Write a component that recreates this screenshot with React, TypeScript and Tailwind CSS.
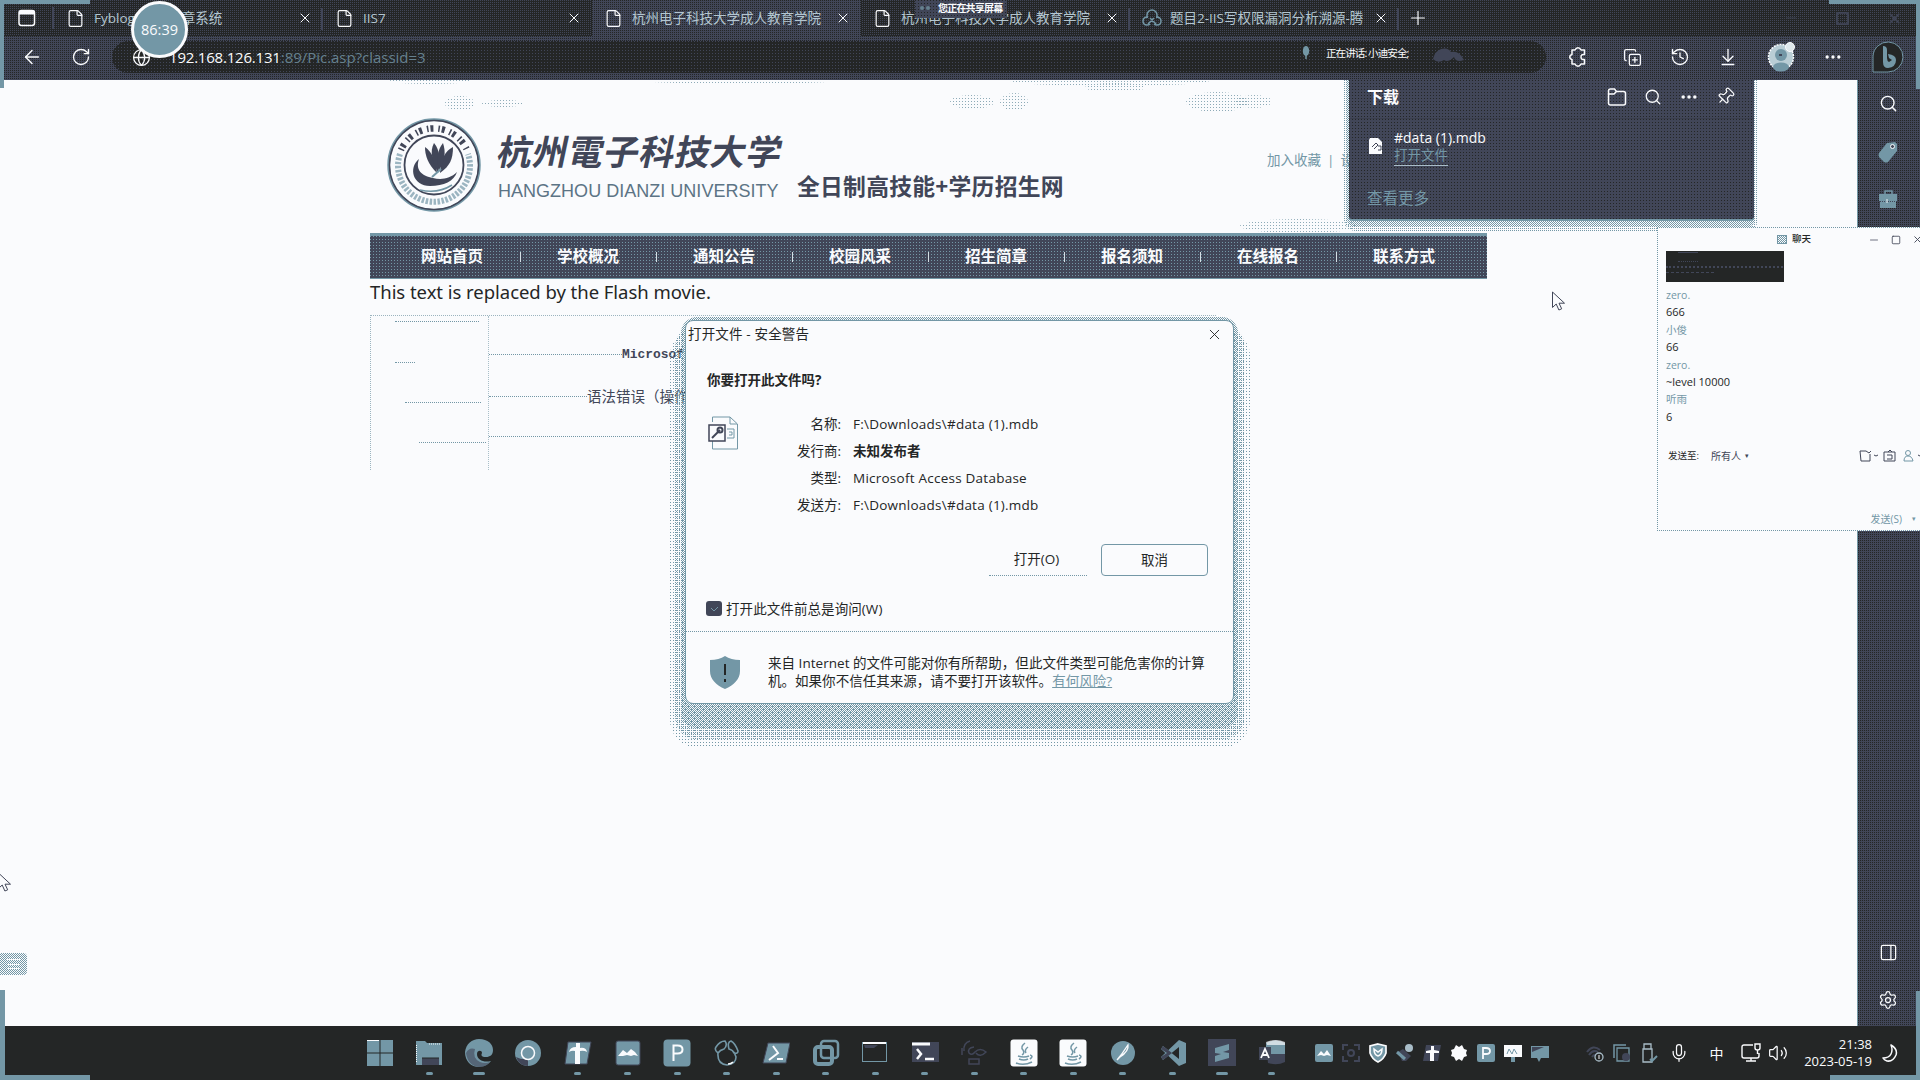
import React from "react";
import {
  ArrowLeft, RotateCw, Globe, History, ArrowDownToLine, Ellipsis, Search, Pin,
  Settings, Mic, Volume2, File, X, Plus, PanelRight,
  Minus, Square, CopyPlus,
} from "lucide-react";

const WHITE = "#fafbfd";
const TEAL = "#7397a6";
const SLATE = "#414658";
const DARK = "#242626";

const grainDark =
  "bg-[#242626] bg-[image:conic-gradient(from_270deg_at_1px_1px,#414658_90deg,transparent_0)] bg-[size:2px_2px]";
const grainSparse =
  "bg-[#242626] bg-[image:conic-gradient(from_270deg_at_1px_1px,#414658_90deg,transparent_0)] bg-[size:3px_3px]";
const grainSlate =
  "bg-[#414658] bg-[image:conic-gradient(from_270deg_at_1px_1px,#242626_90deg,transparent_0)] bg-[size:2px_2px]";
const grainPanel =
  "bg-[#414658] bg-[image:conic-gradient(from_270deg_at_1px_1px,#242626_90deg,transparent_0)] bg-[size:3px_3px]";
const grainNav =
  "bg-[#414658] bg-[image:conic-gradient(from_270deg_at_1px_1px,#7397a6_90deg,transparent_0)] bg-[size:3px_3px]";
const checker =
  "bg-[image:conic-gradient(#7397a6_25%,transparent_0_50%,#7397a6_0_75%,transparent_0)] bg-[size:2px_2px]";
const dots2 =
  "bg-[image:conic-gradient(from_270deg_at_1px_1px,#7397a6_90deg,transparent_0)] bg-[size:2px_2px]";
const dots3 =
  "bg-[image:conic-gradient(from_270deg_at_1px_1px,#7397a6_90deg,transparent_0)] bg-[size:3px_3px]";

function Tab({ label, active, icon, sep }: { label: string; active?: boolean; icon?: React.ReactNode; sep?: boolean }) {
  return (
    <div className={"relative flex h-9 w-[269px] shrink-0 items-center pl-3 pr-2.5 " + (active ? grainSlate : "")}>
      <span className="w-[19px] shrink-0">{icon ?? <File size={19} strokeWidth={1.5} color={WHITE} />}</span>
      <span className="ml-[9px] w-[196px] overflow-hidden whitespace-nowrap text-[13.5px] text-[#b4c6d0]">{label}</span>
      <X size={16} strokeWidth={1.5} color={WHITE} className="ml-auto shrink-0" />
      {sep && <span className="absolute right-0 top-2 h-[22px] w-0.5 bg-[#414658]" />}
    </div>
  );
}

function CloudLoops() {
  return (
    <svg width="20" height="18" viewBox="0 0 20 18" fill="none" stroke={TEAL} strokeWidth="1.500">
      <path d="M5 9V6a5 5 0 0 1 10 0v3M8 9l6 6M12 9l-6 6" />
      <path d="M6 8q-5 0-5 4t4 4q2 0 3-1M14 8q5 0 5 4t-4 4q-2 0-3-1" />
    </svg>
  );
}

function WindowGlyph() {
  return (
    <svg width="18" height="18" viewBox="0 0 18 18" fill="none">
      <rect x="1" y="1.500" width="15.500" height="15" rx="2.500" stroke={WHITE} strokeWidth="1.500" />
      <path d="M1 4q0-3 3-3h10q3 0 3 3v1.500H1Z" fill={WHITE} />
    </svg>
  );
}

function TabStrip() {
  return (
    <div className={"flex h-9 shrink-0 items-center " + grainDark}>
      <div className="flex w-[54px] items-center justify-between pl-[18px]">
        <WindowGlyph />
        <span className="h-[22px] w-0.5 bg-[#414658]" />
      </div>
      <Tab label="Fyblogs博客文章系统" sep />
      <Tab label="IIS7" />
      <Tab label="杭州电子科技大学成人教育学院" active />
      <Tab label="杭州电子科技大学成人教育学院" sep />
      <Tab label="题目2-IIS写权限漏洞分析溯源-腾" sep icon={<CloudLoops />} />
      <Plus size={22} strokeWidth={1.3} color={WHITE} className="ml-[8px]" />
      <div className="ml-auto mr-[17px] flex items-center gap-9">
        <Minus size={16} strokeWidth={1.2} color={SLATE} />
        <Square size={15} strokeWidth={3} color={SLATE} />
        <X size={17} strokeWidth={2.4} color={SLATE} />
      </div>
    </div>
  );
}

function Bing() {
  return (
    <svg width="34" height="34" viewBox="0 0 34 34">
      <path d="M2 32V16A15 15 0 1 1 17 32Z" fill={DARK} stroke={TEAL} strokeWidth="1" />
      <path d="M12 6q4 0 4 4v8q0 3 2 4l3-2-3-2-1-4q8 1 8 6 0 7-8 8-5 0-5-6Z" fill={TEAL} />
    </svg>
  );
}

function Avatar() {
  return (
    <svg width="28" height="30" viewBox="0 0 28 30">
      <circle cx="14" cy="15" r="12.500" fill="#b9cdd5" stroke={WHITE} strokeWidth="1.500" strokeDasharray="2 1" />
      <circle cx="23" cy="5" r="4.500" fill="#dfe8ec" stroke={WHITE} />
      <circle cx="14" cy="13" r="6" fill={TEAL} />
      <ellipse cx="14" cy="25" rx="8" ry="4.500" fill={TEAL} />
      <path d="M12 13h3" stroke={SLATE} strokeWidth="2" />
    </svg>
  );
}

function PuzzleGlyph() {
  return (
    <svg width="18" height="20" viewBox="0 0 18 20" fill="none" stroke={WHITE} strokeWidth="1.500">
      <path d="M3 3h3q1-2.200 3-2.200T12 3h3.500v4.500q-3.500-.5-3.500 2.500t3.500 2.500V17H12q-1 2.200-3 2.200T6 17H3v-4.500Q.8 12 .8 10T3 7.500Z" strokeLinejoin="round" />
    </svg>
  );
}

function Toolbar() {
  return (
    <div className={"flex h-11 shrink-0 items-center pl-[21px] pr-[15px] " + grainSlate}>
      <ArrowLeft size={22} strokeWidth={1.6} color={WHITE} className="-mt-0.5" />
      <RotateCw size={20} strokeWidth={1.6} color={WHITE} className="-mt-0.5 ml-7" />
      <div className={"-mt-0.5 ml-[21px] flex h-8 w-[1434px] items-center rounded-full " + grainSparse}>
        <Globe size={19} strokeWidth={1.6} color={WHITE} className="ml-[20px]" />
        <span className="ml-[18px] w-[1137px] whitespace-nowrap text-[15px]">
          <span className="tracking-[-0.2px] text-[#fafbfd]">192.168.126.131</span>
          <span className="tracking-[-0.030px] text-[#66818f]">:89/Pic.asp?classid=3</span>
        </span>
        <svg width="8" height="14" viewBox="0 0 8 14" className="-mt-2 -ml-[4px]"><ellipse cx="4" cy="5" rx="3.200" ry="5" fill={TEAL} /><path d="M4 9v4" stroke={TEAL} strokeWidth="1.500" /></svg>
        <span className="-mt-1.5 ml-[16px] w-[82px] whitespace-nowrap text-[10.500px] tracking-[-0.900px] text-[#fafbfd]">正在讲话: 小迪安全;</span>
        <svg width="34" height="16" className="-mt-1 ml-[24px]" viewBox="0 0 34 16">
          <path d="M1 12q2-8 8-10 7-2 10 3 8-2 13 8-8 3-10-3-6 6-10 3-6 4-11-1Z" fill={SLATE} />
        </svg>
      </div>
      <div className="-mt-0.5 ml-[23px] flex flex-1 items-center justify-between">
        <PuzzleGlyph />
        <CopyPlus size={19} strokeWidth={1.6} color={WHITE} className="ml-3" />
        <History size={20} strokeWidth={1.6} color={WHITE} className="ml-1" />
        <ArrowDownToLine size={20} strokeWidth={1.6} color={WHITE} className="ml-1" />
        <span className="ml-1"><Avatar /></span>
        <Ellipsis size={20} strokeWidth={2} color={WHITE} className="ml-1" />
        <span className="ml-1"><Bing /></span>
      </div>
    </div>
  );
}

function Seal() {
  return (
    <svg width="94" height="94" viewBox="0 0 94 94" fill="none">
      <circle cx="47" cy="47" r="45.500" stroke={TEAL} strokeWidth="2.500" />
      <circle cx="47" cy="47" r="44.500" stroke={SLATE} strokeWidth="1.500" />
      <path d="M13 36A36 36 0 1 0 81 36" stroke={TEAL} strokeWidth="6" strokeDasharray="2.500 1.500" opacity=".7" />
      <path d="M14 32A36 36 0 0 1 80 32" stroke={SLATE} strokeWidth="6.500" strokeDasharray="1.500 2 3 5" />
      <circle cx="47" cy="47" r="29.500" stroke={SLATE} strokeWidth="1.800" fill={WHITE} />
      <path d="M32 41C21 50 26 68 43 68c14 0 24-5 27-14-7 7-16 8-24 6-11-2-18-8-14-19Z" fill={SLATE} />
      <path d="M33 72q18 4 32-5" stroke={TEAL} strokeWidth="1.500" />
      <path d="M50 55C49 43 45 34 38 29c0 9 3 17 12 26Z" fill={SLATE} />
      <path d="M51 55c3-12 2-23-4-30-5 9-1 19 4 30Z" fill={SLATE} />
      <path d="M53 55c10-7 13-14 13-26-8 4-12 12-13 26Z" fill={SLATE} />
      <path d="M52 52c6-9 7-18 4-27-5 6-7 15-4 27Z" fill={SLATE} />
      <path d="M45 59l9-8" stroke={TEAL} strokeWidth="2" />
    </svg>
  );
}

const nav = ["网站首页", "学校概况", "通知公告", "校园风采", "招生简章", "报名须知", "在线报名", "联系方式"];

function Patch({ cls }: { cls: string }) {
  return <div className={"absolute rounded-[50%] opacity-80 " + dots3 + " " + cls} />;
}

function Page() {
  return (
    <main className="relative flex-1 overflow-hidden bg-[#fafbfd]">
      <Patch cls="left-[445px] top-[16px] h-[15px] w-[30px]" />
      <Patch cls="left-[482px] top-[20px] h-[7px] w-[42px]" />
      <Patch cls="left-[950px] top-[15px] h-[14px] w-[44px]" />
      <Patch cls="left-[1000px] top-[13px] h-[18px] w-[28px]" />
      <Patch cls="left-[1186px] top-[12px] h-[20px] w-[62px]" />
      <Patch cls="left-[1236px] top-[15px] h-[13px] w-[36px]" />
      <Patch cls="left-[390px] top-[-3px] h-[7px] w-[80px]" />
      <Patch cls="left-[640px] top-[-4px] h-[8px] w-[200px]" />
      <Patch cls="left-[1010px] top-[-5px] h-[11px] w-[200px]" />
      <Patch cls="left-[1085px] top-[3px] h-[9px] w-[60px]" />
      <Patch cls="left-[1240px] top-[139px] h-[14px] w-[120px]" />
      <div className="ml-[370px] w-[1117px]">
        <header className="flex h-[153px]">
          <div className="ml-[17px] mt-[38px]"><Seal /></div>
          <div className="ml-[14px] mt-[47px] w-[302px]">
            <div className="-skew-x-12 whitespace-nowrap pl-[3px] text-[35px] font-bold leading-[50px] tracking-[0.6px] text-[#414658]">杭州電子科技大学</div>
            <div className="mt-[2px] whitespace-nowrap pl-[3px] font-['Liberation_Sans'] text-[18px] leading-[24px] tracking-[0.020px] text-[#5c7485]">HANGZHOU DIANZI UNIVERSITY</div>
          </div>
          <div className="mt-[90px] whitespace-nowrap text-[22.8px] font-bold leading-[34px] tracking-[0.25px] text-[#414658]">全日制高技能+学历招生网</div>
          <div className="ml-auto mr-[133px] mt-[70px] flex whitespace-nowrap text-[13.5px] leading-5 text-[#7397a6]">
            <span>加入收藏</span><span className="mx-[6px]">|</span><span>设</span>
          </div>
        </header>
        <nav className={"flex h-[46px] border-b border-t-[3px] border-[#7397a6] px-[14px] " + grainNav}>
          {nav.map((n, i) => (
            <div key={n} className="flex w-[136px] shrink-0 items-center">
              <span className="flex-1 whitespace-nowrap text-center text-[15.500px] font-semibold text-[#fafbfd]">{n}</span>
              {i < 7 && <span className="-mr-px h-2.5 w-px bg-[#d5dfe5]" />}
            </div>
          ))}
        </nav>
        <p className="-mt-px whitespace-nowrap font-['Noto_Sans'] text-[18.5px] leading-[27px] tracking-[-0.040px] text-[#242626]">This text is replaced by the Flash movie.</p>
        <div className="mt-[10px] flex h-[155px] w-[846px] border-l border-t border-dotted border-[#7397a6]/70">
          <div className="flex w-[118px] flex-col border-r border-dotted border-[#7397a6]/60">
            <div className="ml-6 h-[6px] w-[84px] border-b border-dotted border-[#7397a6]" />
            <div className="ml-6 h-[41px] w-5 border-b border-dotted border-[#7397a6]" />
            <div className="ml-[34px] h-[40px] w-[76px] border-b border-dotted border-[#7397a6]" />
            <div className="ml-12 h-[40px] w-[67px] border-b border-dotted border-[#7397a6]" />
          </div>
          <div className="flex flex-1 flex-col text-[#414658]">
            <div className="flex h-[39px] items-end">
              <span className="w-[133px] border-b border-dotted border-[#7397a6]" />
              <span className="-mb-[9px] whitespace-nowrap font-['Liberation_Mono'] text-[12.900px] font-bold leading-[18px]">Microsoft</span>
            </div>
            <div className="flex h-[42px] items-end">
              <span className="w-[98px] border-b border-dotted border-[#7397a6]" />
              <span className="-mb-[11px] whitespace-nowrap text-[14.500px] leading-[22px]">语法错误（操作</span>
            </div>
            <div className="h-[40px] border-b border-dotted border-[#7397a6]" />
          </div>
        </div>
      </div>
      <Cursor cls="left-[1552px] top-[211px]" />
    </main>
  );
}

function Cursor({ cls }: { cls: string }) {
  return (
    <svg className={"absolute " + cls} width="14" height="21" viewBox="0 0 14 21">
      <path d="M.5 1v15.500l3.700-3.500 2.700 6 2.800-1.200L7 12.200h5.500Z" fill={WHITE} stroke={SLATE} />
    </svg>
  );
}

function Sidebar() {
  return (
    <aside className={"flex w-[63px] flex-col items-center border-l border-[#7397a6] pr-0.5 pt-[14px] " + grainSlate}>
      <Search size={19} strokeWidth={1.8} color={WHITE} />
      <svg width="20" height="22" viewBox="0 0 20 22" className="mt-7">
        <path d="M9 2l8-1 2 2v7L10 21q-2 1-4 0l-5-5q-1-2 0-4Z" fill={TEAL} />
        <circle cx="14.500" cy="5.500" r="2" fill={SLATE} stroke={WHITE} />
      </svg>
      <svg width="20" height="20" viewBox="0 0 20 20" className="mt-[26px]">
        <path d="M7 5V2h7v3" stroke={TEAL} strokeWidth="1.500" fill="none" />
        <path d="M1 5h18v7H1ZM2 12h16v7H2Z" fill={TEAL} />
        <path d="M2 12.500h16" stroke={SLATE} strokeDasharray="1 1" />
        <path d="M9 10v4" stroke="#c5d4db" strokeWidth="1.500" />
      </svg>
      <PanelRight size={19} strokeWidth={1.6} color={WHITE} className="mb-[28px] mt-auto" />
      <Settings size={20} strokeWidth={1.5} color={WHITE} className="mb-4" />
    </aside>
  );
}

function FolderGlyph() {
  return (
    <svg width="20" height="20" viewBox="0 0 20 20" fill="none" stroke={WHITE} strokeWidth="1.500">
      <path d="M1.500 4q0-2 2-2h4l2 2.500h7q2 0 2 2V16q0 2-2 2h-13q-2 0-2-2ZM1.500 7H7l2.500-2.500" />
    </svg>
  );
}

function DownloadPanel() {
  return (
    <div className="absolute left-[1344px] top-[80px] w-[414px]">
      <div className={"absolute -bottom-[10px] left-0 right-0 top-0 rounded-b-xl " + dots2} />
      <div className={"absolute -bottom-[6px] left-[3px] right-[3px] top-0 rounded-b-lg " + checker} />
      <div className={"relative ml-[5px] flex h-[141px] w-[405px] flex-col rounded-b border-b-2 border-[#7397a6] " + grainPanel}>
        <div className="flex h-[39px] items-center border-b border-[#3a3e4c] pl-[18px] pr-[19px] text-[#fafbfd]">
          <span className="mt-[-5px] text-[16px] font-bold">下载</span>
          <div className="-mt-[5px] ml-auto flex items-center gap-[17px]">
            <FolderGlyph /><Search size={18} strokeWidth={1.7} />
            <Ellipsis size={20} strokeWidth={2.2} /><Pin size={19} strokeWidth={1.6} className="rotate-45" />
          </div>
        </div>
        <div className="flex pl-[19px] pt-[9px]">
          <svg width="16" height="18" viewBox="0 0 16 18" className="mt-[9px]">
            <path d="M2 1h8l4 4v12H1V3Z" fill={WHITE} />
            <path d="M4 10l4-4 2 2-4 4M10 9h3v4h-3" stroke={SLATE} fill="none" />
          </svg>
          <div className="ml-[10px] flex flex-col items-start">
            <span className="whitespace-nowrap text-[14px] leading-[19px] text-[#fafbfd]">#data (1).mdb</span>
            <span className="h-[19px] border-b border-[#a9bdc8] text-[13.500px] leading-[16px] text-[#7397a6]">打开文件</span>
          </div>
        </div>
        <span className="ml-[18px] mt-[21px] text-[15.500px] leading-[22px] text-[#7397a6]">查看更多</span>
      </div>
    </div>
  );
}

function Row({ k, v, bold }: { k: string; v: string; bold?: boolean }) {
  return (
    <div className="flex h-[27px] items-center whitespace-nowrap text-[13.500px]">
      <span className="w-[95px] text-right">{k}</span>
      <span className={"ml-3 " + (bold ? "font-bold" : "tracking-[0.240px]")}>{v}</span>
    </div>
  );
}

function Dialog() {
  return (
    <div className="absolute left-[670px] top-[314px] h-[434px] w-[580px]">
      <div className={"absolute inset-x-0 bottom-0 top-[14px] rounded-[28px] " + dots3} />
      <div className={"absolute inset-x-[5px] bottom-[8px] top-[10px] rounded-[24px] " + dots2} />
      <div className={"absolute bottom-[20px] left-[11px] right-[12px] top-[3px] rounded-[16px] " + checker} />
      <section className="absolute left-[15px] top-[6px] flex h-[384px] w-[549px] flex-col rounded-lg border border-[#7397a6] bg-[#fafbfd] text-[#242626]">
        <div className="flex h-[27px] items-center justify-between pl-[2px] pr-[10px] text-[13.500px] tracking-[0.160px]">
          <span className="whitespace-nowrap">打开文件 - 安全警告</span>
          <X size={17} strokeWidth={1.3} />
        </div>
        <h1 className="ml-[21px] mt-[22px] whitespace-nowrap text-[13.500px] font-bold leading-5">你要打开此文件吗?</h1>
        <div className="mt-[21px] flex pl-[22px]">
          <svg width="32" height="34" viewBox="0 0 32 34" fill="none" className="mt-[5px]">
            <path d="M4.500 6V1H22l7.500 7v25h-25v-8" stroke={TEAL} />
            <path d="M22 1v7h7M19 13h7v9h-7M21 16h3v3h-3" stroke={TEAL} />
            <rect x="1" y="9" width="16" height="16" stroke={SLATE} strokeWidth="1.500" />
            <path d="M4 22l8-8" stroke={SLATE} strokeWidth="2" />
            <circle cx="12" cy="14" r="2.500" stroke={SLATE} strokeWidth="2" />
          </svg>
          <div className="ml-[6px]">
            <Row k="名称:" v="F:\Downloads\#data (1).mdb" />
            <Row k="发行商:" v="未知发布者" bold />
            <Row k="类型:" v="Microsoft Access Database" />
            <Row k="发送方:" v="F:\Downloads\#data (1).mdb" />
          </div>
        </div>
        <div className="mt-[25px] flex justify-end gap-[14px] pr-[25px] text-[13.500px]">
          <div className="flex h-8 w-[98px] items-center justify-center border-b border-dotted border-[#7397a6] pr-[3px]">打开(O)</div>
          <div className="flex h-8 w-[107px] items-center justify-center rounded border border-[#7397a6]">取消</div>
        </div>
        <div className="mt-[23px] flex items-center pl-[20px] text-[13.500px] leading-5">
          <svg width="16" height="16" viewBox="0 0 16 16"><rect width="16" height="15" rx="3" fill={SLATE} /><path d="M5 7l3 3 4-4" stroke={TEAL} fill="none" /></svg>
          <span className="ml-[4px] whitespace-nowrap tracking-[0.080px]">打开此文件前总是询问(W)</span>
        </div>
        <div className="mt-[12px] flex flex-1 border-t border-dotted border-[#7397a6] pl-[23px] pt-[24px]">
          <svg width="32" height="33" viewBox="0 0 32 33">
            <path d="M16 0q6 4 15 4v11c0 8-6 14-15 18C7 29 1 23 1 15V4q9 0 15-4Z" fill={TEAL} />
            <path d="M16 8v11M16 23v3" stroke={DARK} strokeWidth="2" />
          </svg>
          <p className="-mt-[2px] ml-[27px] whitespace-nowrap text-[13.500px] leading-[18px] tracking-[0.030px]">
            来自 Internet 的文件可能对你有所帮助，但此文件类型可能危害你的计算<br />
            机。如果你不信任其来源，请不要打开该软件。<span className="text-[#7397a6] underline">有何风险?</span>
          </p>
        </div>
      </section>
    </div>
  );
}

function Msg({ t, name }: { t: string; name?: boolean }) {
  return <div className={"whitespace-nowrap leading-[17.400px] " + (name ? "text-[10.500px] text-[#7397a6]" : "-mt-px mb-px text-[11px] text-[#242626]")}>{t}</div>;
}

function Chat() {
  return (
    <section className="absolute left-[1657px] top-[227px] flex h-[304px] w-[263px] flex-col overflow-hidden border border-r-0 border-dotted border-[#7397a6] bg-[#fafbfd]">
      <div className="flex h-[23px] shrink-0 items-center pl-[119px]">
        <span className={"h-[9px] w-[10px] border border-[#7397a6] " + checker} />
        <span className="ml-[5px] whitespace-nowrap text-[9.500px] font-medium text-[#242626]">聊天</span>
        <div className="ml-auto flex items-center gap-[11px] text-[#414658]">
          <Minus size={12} strokeWidth={1.5} /><Square size={10} strokeWidth={2} /><X size={11} strokeWidth={2} className="-mr-[3px]" />
        </div>
      </div>
      <div className="ml-[8px] flex h-[31px] w-[118px] shrink-0 flex-col gap-1 bg-[#242626] pt-px">
        <span className="ml-3 h-px w-5 bg-[#414658]" />
        <span className="ml-3 mt-1 w-5 border-b border-dotted border-[#414658]" />
        <span className="w-[117px] border-b-2 border-dotted border-[#414658]" />
        <span className="w-[48px] border-b border-dashed border-[#414658]" />
      </div>
      <div className="ml-[8px] mt-[5px]">
        <Msg t="zero." name /><Msg t="666" /><Msg t="小俊" name /><Msg t="66" />
        <Msg t="zero." name /><Msg t="~level 10000" /><Msg t="听雨" name /><Msg t="6" />
      </div>
      <div className="mt-[20px] flex h-[20px] items-center pl-[10px] text-[10px] text-[#414658]">
        <span className="w-[43px] whitespace-nowrap text-[9.500px] text-[#242626]">发送至:</span>
        <span className="whitespace-nowrap">所有人</span><span className="ml-1 text-[7px]">▾</span>
        <svg width="62" height="14" viewBox="0 0 62 14" fill="none" stroke={SLATE} className="ml-auto">
          <path d="M8 2H2l1 10h9V5M8 2l3 2 2-2M16 6l2 1 2-1M26 3h11v9H26ZM30 3l2-2 2 2M29 6h5v4h-5M60 6l2 1" />
          <circle cx="50" cy="4" r="2.500" stroke={TEAL} /><path d="M46 12q0-5 4-5t5 5Z" stroke={TEAL} />
        </svg>
      </div>
      <div className="mb-[3px] mt-auto flex items-center justify-end gap-[10px] pr-1 text-[10px] text-[#7397a6]">
        <span>发送(S)</span><span className="text-[7px]">▾</span>
      </div>
    </section>
  );
}

const sv = { width: 28, height: 28, viewBox: "0 0 28 28", fill: "none" } as const;
const Java = () => (
  <svg {...sv}><rect x=".5" y=".5" width="27" height="27" rx="3" fill={WHITE} />
    <path d="M15 4q-5 4-2 7 2 3-1 5M18 8q-4 3-2 6" stroke={TEAL} strokeWidth="1.500" />
    <path d="M8 17q6 2 11 0M9 20q5 2 9 0M6 24q8 3 16-1M20 16q4 1 0 4" stroke={TEAL} strokeWidth="1.600" /></svg>
);

const apps: React.ReactNode[] = [
  <svg {...sv}><path d="M1 1h12.500v12.500H1ZM14.500 1H27v12.500H14.500ZM1 14.500h12.500V27H1ZM14.500 14.500H27V27H14.500Z" fill={TEAL} /><path d="M1 1h12v1H1Z" fill={WHITE} /></svg>,
  <svg {...sv}><path d="M1 2h9l2 2h15v22H1Z" fill={TEAL} /><path d="M7 19h17v7H7Z" fill={SLATE} /><path d="M1.500 6v18M14 5h12" stroke={WHITE} strokeDasharray="1 1" /><path d="M7 19h17" stroke={DARK} /></svg>,
  <svg {...sv}><path d="M0 13C1 5 7 0 14 0c9 0 14 5 14 11 0 5-3 7-7 7-5 0-5-2-4-4 0-3-5-3-5 1 0 6 7 9 14 7-2 3-7 6-12 6C6 28 0 22 0 13Z" fill={TEAL} /><path d="M1 14q3-6 9-4-3 9 5 13 5 2 10 0-4 5-11 5Q3 27 1 14Z" fill={SLATE} opacity=".6" /></svg>,
  <svg {...sv}><circle cx="14" cy="14" r="13" fill={TEAL} /><path d="M2 18q6 3 12 2v7Q5 27 2 18Z" fill={SLATE} /><circle cx="14" cy="14" r="6.500" stroke={WHITE} strokeWidth="1.500" /></svg>,
  <svg {...sv}><path d="M4 3h23l-4 22H1Z" fill={TEAL} stroke={SLATE} /><path d="M12 4h4v5q6-1 7 4-3-2-7-1v13h-5V12q-3-1-6 1 1-5 7-5Z" fill={WHITE} /></svg>,
  <svg {...sv}><rect x="2" y="2" width="24" height="24" rx="2" fill={TEAL} stroke={SLATE} /><path d="M4 17l5-6 4 3 4-4 4 3 3 4-4-1-3 1-4-1-4 1Z" fill={WHITE} /></svg>,
  <svg {...sv}><rect x=".5" y=".5" width="27" height="27" rx="4" fill={TEAL} /><path d="M10.500 22V6.500h4q5 0 5 4t-5 4h-4" stroke={WHITE} strokeWidth="2" /></svg>,
  <svg {...sv} stroke={TEAL} strokeWidth="1.600"><path d="M5 14q-4-3-2-6 4-6 9-6 3 4-1 8-4 1-6 4Zm0 0q-1 11 9 12 9-1 9-8l-2-5M16 10q-2-7 2-8 4 2 7 10 0 3-4 2-1-3-5-4Z" /><path d="M15 25q3 0 5-2" stroke={WHITE} /></svg>,
  <svg {...sv}><path d="M6 4h22l-4 20H1Z" fill={TEAL} stroke={SLATE} /><path d="M11 7l5 7-9 7M15 20h6" stroke={WHITE} strokeWidth="2" /></svg>,
  <svg {...sv} stroke={TEAL} strokeWidth="4"><rect x="3" y="8" width="17" height="17" rx="3" /><rect x="9" y="2" width="17" height="17" rx="3" strokeWidth="2.500" /></svg>,
  <svg {...sv}><rect x="1.500" y="3.500" width="24" height="19" stroke={TEAL} fill={DARK} /><path d="M2 4h23" stroke={WHITE} strokeWidth="2" /><path d="M3 6h14l-4 3H4Z" fill={SLATE} /></svg>,
  <svg {...sv}><rect x="1" y="3" width="27" height="20" fill={SLATE} /><path d="M1 5h18" stroke={WHITE} strokeWidth="3" /><path d="M6 10l4 5-4 5M14 20h9" stroke={WHITE} strokeWidth="2.500" /></svg>,
  <svg {...sv} stroke={SLATE} strokeWidth="1.500"><path d="M10 2q-7 2-6 10M14 8q-7 1-5 6 3 3 6-1 5-5 11 0-6 6-10 1M2 9v7M9 20h10v5H9Z" /></svg>,
  <Java />,
  <Java />,
  <svg {...sv}><circle cx="14" cy="14" r="12" fill={TEAL} /><path d="M8 21l4-5 7-10q1 6-8 12Z" stroke={WHITE} strokeWidth="1.300" /></svg>,
  <svg {...sv}><path d="M20 1l7 3v20l-7 3L2 10l2-3 16 13V8L4 21l-2-3Z" fill={TEAL} /><path d="M2 10l2-3 9 7-9 7-2-3 6-4Z" fill={SLATE} /></svg>,
  <svg {...sv}><rect width="28" height="27" fill={SLATE} /><path d="M7 9l14-4v6l-6 2 6 1v5L7 23v-6l6-2-6-1Z" fill={TEAL} /></svg>,
  <svg {...sv}><path d="M8 4q10-5 19 0v19q-8 4-17 1Z" fill={SLATE} /><path d="M8 4q10-5 19 0v11H8Z" fill={TEAL} /><path d="M8 3q10-4 19 0v3H9Z" fill={WHITE} opacity=".7" /><path d="M1 8h12v13H1Z" fill={SLATE} /><path d="M3 19l4-9 4 9M5 16h5" stroke={WHITE} strokeWidth="1.800" /></svg>,
];

const ts = { width: 20, height: 20, viewBox: "0 0 20 20", fill: "none" } as const;
const tray: React.ReactNode[] = [
  <svg {...ts}><rect x="1" y="1" width="18" height="18" rx="2" fill={TEAL} /><path d="M3 13l4-5 3 3 3-4 4 6-4-1-3 1-3-1Z" fill={WHITE} /></svg>,
  <svg {...ts} stroke={SLATE} strokeWidth="2"><path d="M2 7V2h5M13 2h5v5M18 13v5h-5M7 18H2v-5" /><circle cx="10" cy="10" r="3" /></svg>,
  <svg {...ts}><path d="M10 1l8 2v7q-2 6-8 9-6-3-8-9V3Z" fill={TEAL} stroke={WHITE} strokeWidth="1.700" /><path d="M6 6q0 6 4 7 4-1 4-7l-4 3Z" stroke={WHITE} strokeWidth="1.500" /></svg>,
  <svg {...ts}><path d="M3 9l5-3 8 7-5 5H7Z" fill={SLATE} /><path d="M2 9l8 7" stroke={TEAL} strokeWidth="3" /><circle cx="14" cy="5" r="4" fill="#a9bdc8" /></svg>,
  <svg {...ts}><path d="M4 2h15l-3 16H1Z" fill={SLATE} /><path d="M9 3h3v4l5 1v2h-5v8H8v-8H4V8l5-1Z" fill={WHITE} /></svg>,
  <svg {...ts}><path d="M7 2l3 2 3-2 2 4 3 1-1 3 1 3-3 1-2 4-3-2-3 2-2-4-3-1 1-3-1-3 3-1Z" fill={WHITE} /></svg>,
  <svg {...ts}><rect x="1" y="1" width="18" height="18" rx="2" fill={TEAL} /><path d="M7 16V5h3q4 0 4 3t-4 3H7" stroke={WHITE} strokeWidth="1.800" /></svg>,
  <svg {...ts}><path d="M1 2h18v12H1Z" fill={WHITE} /><path d="M8 14h4v5H8Z" fill={TEAL} /><path d="M4 11l2-5 3 5 2-5 3 5" stroke={TEAL} /></svg>,
  <svg {...ts}><path d="M1 3h18v12h-8l-2 4-2-4H1Z" fill={TEAL} /><path d="M2 4h12L2 9Z" fill={SLATE} /></svg>,
];

function Taskbar() {
  return (
    <footer className="relative flex h-[54px] shrink-0 items-center bg-[#242626] text-[#fafbfd]">
      <div className="ml-[355px] flex">
        {apps.map((a, i) => (
          <div key={i} className="relative flex h-[54px] w-[49.560px] items-center justify-center">
            {a}
            {i > 0 && i !== 3 && (
              <span className={"absolute bottom-[5px] h-[3px] rounded-full bg-[#7397a6] " + (i === 2 || i === 17 ? "w-3" : "w-[7px]")} />
            )}
          </div>
        ))}
      </div>
      <div className="ml-[14px] flex">
        {tray.map((a, i) => <div key={i} className="flex w-[27px] justify-center">{a}</div>)}
      </div>
      <div className="ml-[28px] flex items-center">
        <span className="flex w-[27px] justify-center">
          <svg {...ts}><path d="M2 9q6-8 13-2M4 12q4-6 9-3M7 14q2-3 4-2" stroke={SLATE} strokeWidth="2" /><circle cx="14" cy="14" r="4" stroke="#a9bdc8" strokeWidth="1.300" /><path d="M14 12v4" stroke={WHITE} /></svg>
        </span>
        <span className="flex w-[27px] justify-center">
          <svg {...ts}><path d="M2 15V2h12" stroke={TEAL} strokeWidth="1.500" /><path d="M5 5h12v13H5Z" stroke={TEAL} strokeWidth="1.300" /><circle cx="14" cy="14" r="4" fill={SLATE} /></svg>
        </span>
        <span className="flex w-[27px] justify-center">
          <svg {...ts}><path d="M5 1h7v5H5ZM4 6h9v13H4Z" stroke="#a9bdc8" strokeWidth="1.300" /><path d="M11 16l2 2 5-5" stroke={TEAL} strokeWidth="2" /></svg>
        </span>
        <span className="ml-[3px] flex w-[27px] justify-center"><Mic size={20} strokeWidth={1.500} /></span>
        <span className="ml-[10px] flex w-[28px] justify-center text-[14px]">中</span>
        <span className="ml-[7px] flex w-[27px] justify-center">
          <svg {...ts} stroke={WHITE} strokeWidth="1.400"><path d="M12 2H3q-2 0-2 2v9q0 2 2 2h13q2 0 2-2v-3M5 18h10M10 15v3M14 1h5v4q0 2-2.500 2T14 5ZM16.500 7v4" /></svg>
        </span>
        <span className="flex w-[27px] justify-center"><Volume2 size={20} strokeWidth={1.500} /></span>
      </div>
      <div className="absolute right-[48px] top-[10px] whitespace-nowrap text-right text-[13px] leading-[17px]">
        <div>21:38</div><div>2023-05-19</div>
      </div>
      <svg width="16" height="20" viewBox="0 0 16 20" fill="none" stroke={WHITE} strokeWidth="1.500" className="ml-auto mr-[22px]">
        <path d="M9 2q7 4 5 10-3 7-9 6-3-1-4-3 6 0 8-4 2-4 0-9Z" strokeLinejoin="round" />
      </svg>
    </footer>
  );
}

export default function App() {
  return (
    <div className="relative flex h-[1080px] w-[1920px] flex-col overflow-hidden bg-[#fafbfd] font-['Open_Sans','Noto_Sans_CJK_SC',sans-serif]">
      <TabStrip />
      <Toolbar />
      <div className="flex min-h-0 flex-1">
        <Page />
        <Sidebar />
      </div>
      <Taskbar />

      <DownloadPanel />
      <Dialog />
      <Chat />

      <div className={"absolute left-[915px] top-0 flex h-[18px] w-[92px] items-center gap-2 pb-0.5 pl-[5px] " + grainPanel}>
        <span className="w-2.5 border-b-4 border-dotted border-[#66818f]" />
        <span className="whitespace-nowrap text-[10px] font-bold tracking-[-0.800px] text-[#fafbfd]">您正在共享屏幕</span>
      </div>
      <div className="absolute left-[131px] top-px flex size-[57px] items-center justify-center rounded-full border-[3px] border-[#fafbfd] bg-[#7397a6] text-[14.500px] text-[#fafbfd]">
        86:39
      </div>
      <Cursor cls="-left-[2px] top-[872px]" />
      <div className={"absolute left-0 top-[953px] flex h-[22px] w-[27px] items-center justify-center rounded-r " + checker}>
        <span className="flex h-[10px] w-[13px] items-center border-y border-[#fafbfd]"><span className="h-px w-full bg-[#fafbfd]" /></span>
      </div>

      <div className="absolute left-0 top-0 h-[88px] w-[90px] border-l-4 border-t-4 border-[#7397a6]" />
      <div className="absolute right-0 top-0 h-[89px] w-[91px] border-r-4 border-t-4 border-[#7397a6]" />
      <div className="absolute bottom-0 left-0 h-[90px] w-[90px] border-b-[5px] border-l-[5px] border-[#7397a6]" />
      <div className="absolute bottom-0 right-0 h-[89px] w-[90px] border-b-[5px] border-r-4 border-[#7397a6]" />
    </div>
  );
}
